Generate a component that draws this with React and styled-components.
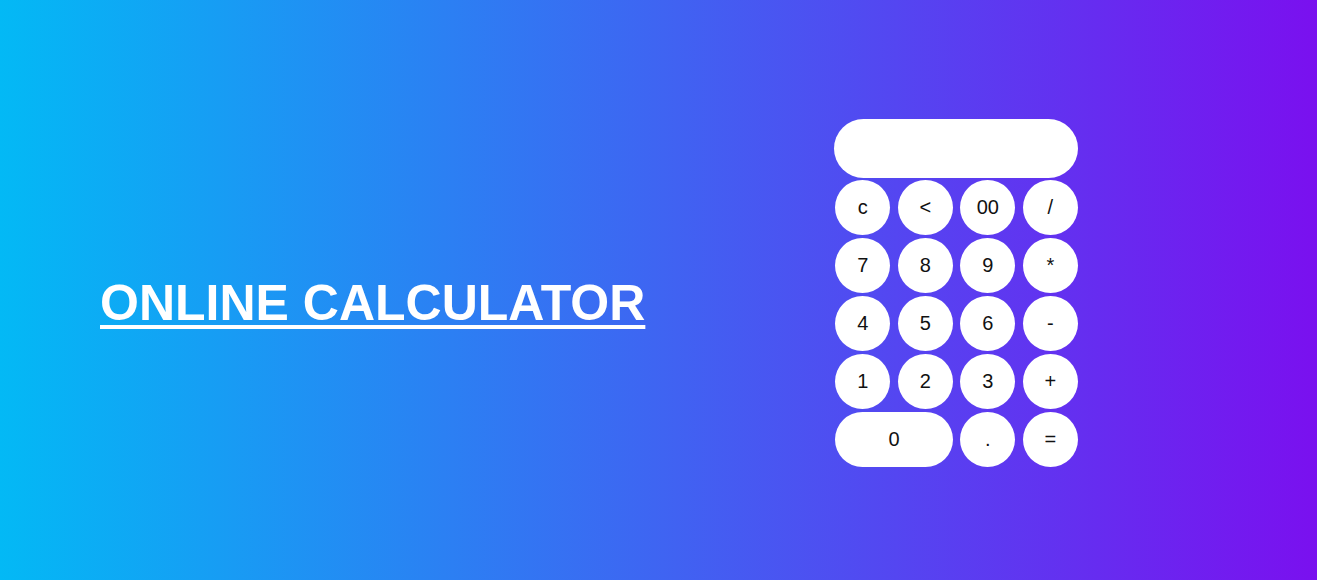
import styled, { createGlobalStyle } from "styled-components";

const GlobalStyle = createGlobalStyle`
    body {
        margin: 0;
        font-family: "Liberation Sans", Arial, sans-serif;
    }
`;

const Page = styled.div`
    height: 580px;
    display: flex;
    align-items: center;
    padding-left: 100px;
    gap: 189px;
    background: linear-gradient(to right, #03b9f5, #7a10ef);
`;

const Title = styled.h1`
    margin: 25px 0 0;
    color: white;
    font-size: 50px;
    font-weight: bold;
    text-decoration: underline;
    text-decoration-thickness: 4px;
    text-underline-offset: 5px;
`;

const Calculator = styled.div`
    width: 244px;
    margin-top: 6px;
    display: flex;
    flex-direction: column;
    gap: 2px;
`;

const Display = styled.input`
    box-sizing: border-box;
    width: 244px;
    height: 59px;
    border: none;
    border-radius: 30px;
    background: white;
    outline: none;
    font-size: 24px;
    padding: 0 20px;
    text-align: right;
`;

const Keys = styled.div`
    display: grid;
    grid-template-columns: repeat(4, 55px);
    column-gap: 7.5px;
    row-gap: 3px;
    padding-left: 1px;
`;

const Key = styled.button`
    height: 55px;
    grid-column: span ${(props) => props.span || 1};
    border: none;
    border-radius: 28px;
    background: white;
    color: #111;
    font-family: "Liberation Sans", Arial, sans-serif;
    font-size: 20px;
    cursor: pointer;
    padding: 0;
`;

const keys = ["c", "<", "00", "/", "7", "8", "9", "*", "4", "5", "6", "-", "1", "2", "3", "+"];

const App = () => {
    return (
        <>
            <GlobalStyle />
            <Page>
                <Title>ONLINE CALCULATOR</Title>
                <Calculator>
                    <Display readOnly />
                    <Keys>
                        {keys.map((k) => (
                            <Key key={k}>{k}</Key>
                        ))}
                        <Key span={2}>0</Key>
                        <Key>.</Key>
                        <Key>=</Key>
                    </Keys>
                </Calculator>
            </Page>
        </>
    );
};

export default App;
